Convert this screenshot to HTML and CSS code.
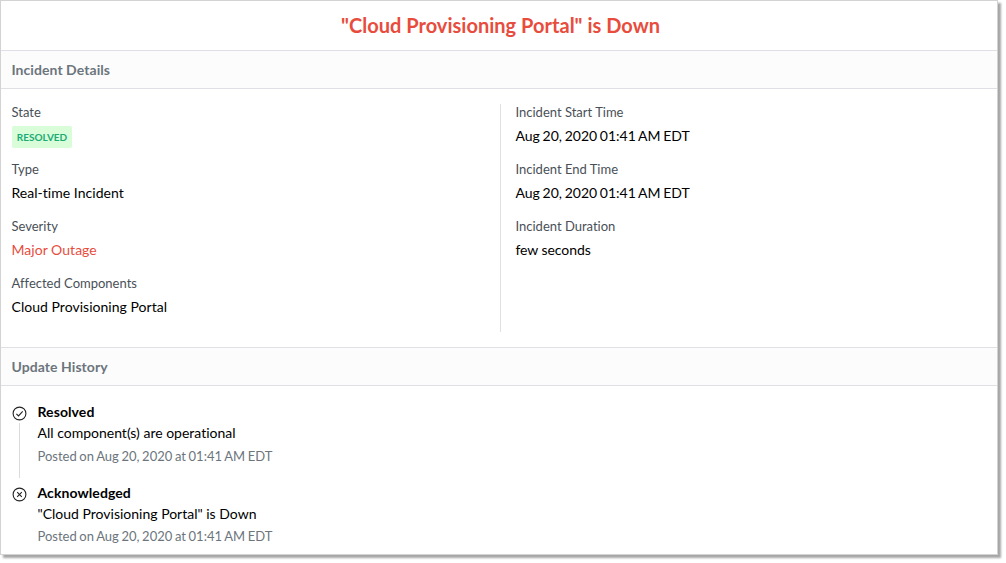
FILE: index.html
```html
<!DOCTYPE html>
<html lang="en">
<head>
<meta charset="utf-8">
<title>Incident</title>
<link rel="stylesheet" href="styles.css">
</head>
<body>
<main class="card">
  <h1 class="title"><span class="title-text">"Cloud Provisioning Portal" is Down</span></h1>
  <h2 class="band"><span>Incident Details</span></h2>
  <section class="details">
    <dl class="column left">
      <div class="field"><dt>State</dt><dd><span class="badge">RESOLVED</span></dd></div>
      <div class="field"><dt>Type</dt><dd>Real-time Incident</dd></div>
      <div class="field"><dt>Severity</dt><dd class="danger">Major Outage</dd></div>
      <div class="field"><dt>Affected Components</dt><dd>Cloud Provisioning Portal</dd></div>
    </dl>
    <dl class="column right">
      <div class="field"><dt>Incident Start Time</dt><dd class="date">Aug 20, 2020 01:41 AM EDT</dd></div>
      <div class="field"><dt>Incident End Time</dt><dd class="date">Aug 20, 2020 01:41 AM EDT</dd></div>
      <div class="field"><dt>Incident Duration</dt><dd class="duration">few seconds</dd></div>
    </dl>
  </section>
  <h2 class="band history-band"><span>Update History</span></h2>
  <section class="history">
    <article class="update">
      <div class="rail">
        <svg class="icon" viewBox="0 0 15 15"><circle cx="7.5" cy="7.5" r="6.4"/><path d="M4.4 7.8l2.1 2.1 4.2-4.5"/></svg>
        <span class="line"></span>
      </div>
      <div class="body">
        <h3>Resolved</h3>
        <p class="message">All component(s) are operational</p>
        <p class="posted">Posted on Aug 20, 2020 at 01:41 AM EDT</p>
      </div>
    </article>
    <article class="update">
      <div class="rail">
        <svg class="icon" viewBox="0 0 15 15"><circle cx="7.5" cy="7.5" r="6.4"/><path d="M5.2 5.2l4.6 4.6M9.8 5.2l-4.6 4.6"/></svg>
      </div>
      <div class="body">
        <h3>Acknowledged</h3>
        <p class="message">"Cloud Provisioning Portal" is Down</p>
        <p class="posted last">Posted on Aug 20, 2020 at 01:41 AM EDT</p>
      </div>
    </article>
  </section>
</main>
</body>
</html>
```

FILE: styles.css
```css
* { box-sizing: border-box; margin: 0; padding: 0; }

body {
  height: 563px;
  background: #fff;
  color: #000;
  font: 14px/20px Lato, "Liberation Sans", sans-serif;
  font-variant-ligatures: none;
}

.card {
  width: 998px;
  height: 555px;
  display: flex;
  flex-direction: column;
  background: #fff;
  border: 1px solid #d3d3d3;
  box-shadow: 3px 3px 2px rgba(0, 0, 0, .35);
}

.title {
  height: 50px;
  padding-left: 3px;
  border-bottom: 1px solid #dee0e6;
  color: #e84c3d;
  font-size: 20px;
  letter-spacing: .02px;
  line-height: 49px;
  text-align: center;
}

.band {
  height: 38px;
  padding-left: 10.5px;
  background: #fcfcfc;
  border-bottom: 1px solid #dee0e6;
  color: #6c757d;
  font-size: 14px;
  letter-spacing: .06px;
  line-height: 38px;
}

.history-band {
  height: 39px;
  border-top: 1px solid #dee0e6;
}

.details {
  height: 258px;
  display: flex;
  padding: 15px 0;
}

.column { display: flex; flex-direction: column; }
.left { width: 500px; padding-left: 10.5px; border-right: 1px solid #dee0e6; }
.right { padding-left: 14.5px; }

.field { height: 57px; }
.field dt { height: 22px; color: #495057; font-size: 13px; line-height: 16px; }
.field dd { letter-spacing: .03px; line-height: 20px; }
.field .danger { color: #e84c3d; }
.field .date { letter-spacing: 0; word-spacing: -.9px; }
.field .duration { letter-spacing: -.07px; }

.badge {
  display: block;
  width: 60px;
  height: 22px;
  margin-left: .5px;
  border-radius: 2px;
  background: #d9fdd9;
  color: #1aab76;
  font-size: 10px;
  font-weight: 700;
  letter-spacing: 0;
  line-height: 23px;
  text-align: center;
}

.history { padding: 16px 11px 0; }
.update { height: 81px; display: flex; }
.rail { width: 15px; display: flex; flex-direction: column; align-items: center; }
.icon { width: 15px; height: 15px; margin-top: 4px; fill: none; stroke: #222; stroke-width: 1.1; }
.line { width: 1px; height: 55px; margin-top: 2px; background: #d9dadd; }
.body { padding-left: 10.5px; }
.body h3 { font-size: 14px; letter-spacing: .08px; line-height: 20px; }
.message { line-height: 22px; }
.posted { color: #6c757d; font-size: 13px; line-height: 24px; word-spacing: -.7px; }
.posted.last { line-height: 22px; }
```
